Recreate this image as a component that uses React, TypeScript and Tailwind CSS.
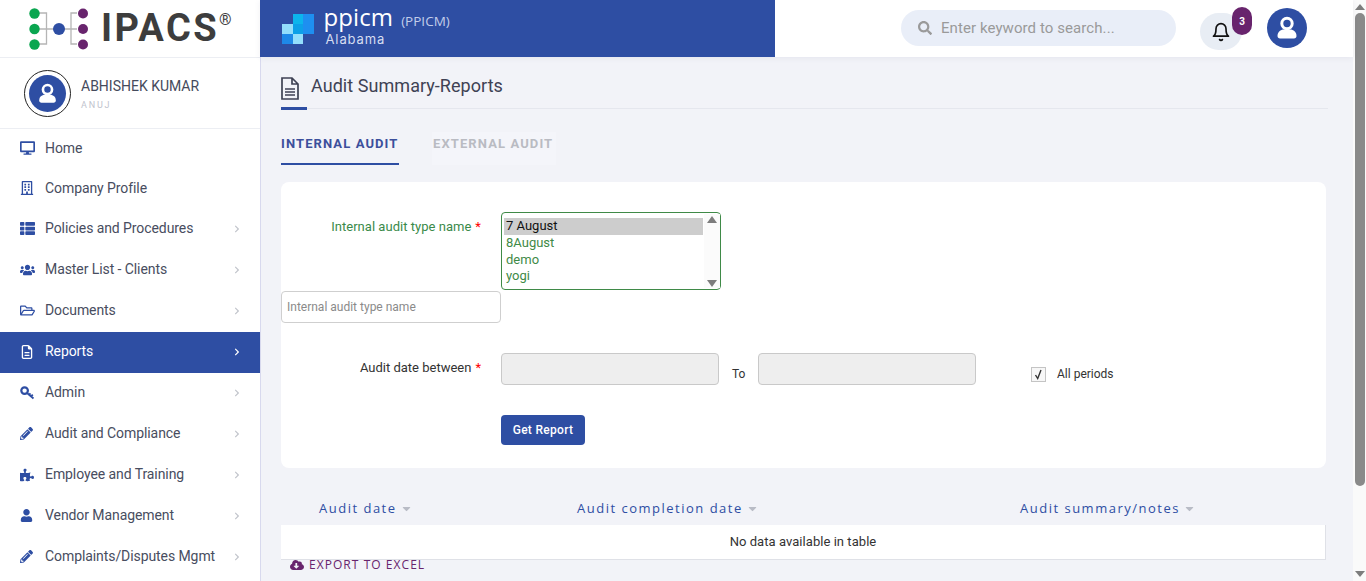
import React from "react";
import { FaDesktop, FaRegBuilding, FaThList, FaUsers, FaRegFolderOpen, FaPencilAlt, FaPuzzlePiece, FaUser, FaSearch, FaChevronRight, FaCloudDownloadAlt, FaCaretDown } from "react-icons/fa";
import { FaRegFileLines } from "react-icons/fa6";
import { LuBell } from "react-icons/lu";

function KeyIcon() {
  return (
    <svg width="15" height="14" viewBox="0 0 15 14" fill="none" stroke="currentColor">
      <circle cx="4.600" cy="4.600" r="3.300" strokeWidth="2.200" />
      <path d="M7 7l6.500 5.500M11 10.500l1.800-1.800M9 8.800l1.500-1.500" strokeWidth="1.800" />
    </svg>
  );
}

const menu = [
  { label: "Home", icon: <FaDesktop size={16} />, h: "h-[40px]" },
  { label: "Company Profile", icon: <FaRegBuilding size={14} />, h: "h-[40px]" },
  { label: "Policies and Procedures", icon: <FaThList size={15} />, arrow: true, h: "h-[41px]" },
  { label: "Master List - Clients", icon: <FaUsers size={16} />, arrow: true, h: "h-[41px]" },
  { label: "Documents", icon: <FaRegFolderOpen size={15} />, arrow: true, h: "h-[41px]" },
  { label: "Reports", icon: <FaRegFileLines size={14} />, arrow: true, active: true, h: "h-[41px]" },
  { label: "Admin", icon: <KeyIcon />, arrow: true, h: "h-[41px]" },
  { label: "Audit and Compliance", icon: <FaPencilAlt size={13} />, arrow: true, h: "h-[41px]" },
  { label: "Employee and Training", icon: <FaPuzzlePiece size={14} />, arrow: true, h: "h-[41px]" },
  { label: "Vendor Management", icon: <FaUser size={13} />, arrow: true, h: "h-[41px]" },
  { label: "Complaints/Disputes Mgmt", icon: <FaPencilAlt size={13} />, arrow: true, h: "h-[41px]" },
];

function LogoMark() {
  return (
    <svg width="60" height="42" viewBox="0 0 60 42" className="shrink-0">
      <g stroke="#b5b5b5" strokeWidth="1.3" fill="none">
        <path d="M6 5H17.500V36H6M6 21H48M48 5H42V36H48" />
      </g>
      <circle cx="5.500" cy="5.500" r="5.200" fill="#0aa650" />
      <circle cx="5.500" cy="21" r="5.200" fill="#0aa650" />
      <circle cx="5.500" cy="36.500" r="5.200" fill="#0aa650" />
      <circle cx="30" cy="21" r="6" fill="#2e4ea3" />
      <circle cx="54" cy="5.500" r="5" fill="#68246d" />
      <circle cx="54" cy="21" r="5" fill="#68246d" />
      <circle cx="54" cy="36.500" r="5" fill="#68246d" />
    </svg>
  );
}

function Squares() {
  const c = ["", "#0cb5ec", "#1e8ff0", "#93defc", "#0ca0e8", "#1e8ff0", "#1e88e8", "#93defc", ""];
  return (
    <div className="grid grid-cols-[repeat(3,10.5px)] grid-rows-[repeat(3,10px)] shrink-0">
      {c.map((v, i) => (
        <div key={i} style={{ background: v || "transparent" }} />
      ))}
    </div>
  );
}

function Avatar({ cls, size }: { cls: string; size: number }) {
  return (
    <div className={`rounded-full bg-[#2e4ea3] flex items-center justify-center ${cls}`}>
      <svg width={size} height={size} viewBox="0 0 24 24" fill="#fff">
        <circle cx="12" cy="7.500" r="5.200" fill="none" stroke="#fff" strokeWidth="3" />
        <path d="M2.500 20c0-4 3-6.500 6.500-6.500h6c3.500 0 6.500 2.500 6.500 6.500 0 1.500-1 2.500-2.500 2.500H5c-1.500 0-2.500-1-2.500-2.500z" />
      </svg>
    </div>
  );
}

function Sidebar() {
  return (
    <aside className="w-[260px] shrink-0 bg-white flex flex-col">
      <div className="h-[58px] border-b border-[#eceef3] flex items-center pl-[29px] gap-[12px]">
        <LogoMark />
        <div className="flex items-start text-[#3d3d3d] font-['Roboto',sans-serif] font-bold text-[38px] tracking-[2.400px] leading-none -mt-[1px]">
          IPACS<span className="text-[16px] font-normal leading-none mt-[3px] tracking-normal">®</span>
        </div>
      </div>
      <div className="h-[71px] border-b border-[#eceef3] flex items-center pl-[24px] gap-[10px]">
        <div className="w-[47px] h-[47px] rounded-full border border-[#222] flex items-center justify-center">
          <Avatar cls="w-[37px] h-[37px]" size={21} />
        </div>
        <div className="flex flex-col gap-[6px] mt-[2px]">
          <div className="text-[14px] leading-[16px] text-[#454a5c]">ABHISHEK KUMAR</div>
          <div className="text-[9px] leading-[11px] tracking-[1.800px] text-[#c0c3cd]">ANUJ</div>
        </div>
      </div>
      {menu.map((m) => (
        <div key={m.label} className={`${m.h} shrink-0 flex items-center pb-[2px] pl-[20px] pr-[19px] ${m.active ? "bg-[#2e4ea3] text-white" : "text-[#484d60]"}`}>
          <span className={`w-[15px] flex justify-start ${m.active ? "text-white" : "text-[#2e4ea3]"}`}>{m.icon}</span>
          <span className="ml-[10px] text-[14px] tracking-[-0.08px] flex-1">{m.label}</span>
          {m.arrow && <FaChevronRight size={8} className={m.active ? "text-white" : "text-[#c2c5cc]"} />}
        </div>
      ))}
    </aside>
  );
}

function Header() {
  return (
    <header className="h-[57px] shrink-0 flex bg-white shadow-[0_1px_6px_rgba(60,70,120,0.08)] relative">
      <div className="w-[515px] bg-[#2e4ea3] flex items-center pl-[22px] gap-[10px] text-white">
        <Squares />
        <div className="flex flex-col -mt-[3px]">
          <div className="flex items-baseline h-[18px] gap-[8px] font-['Open_Sans',sans-serif]">
            <span className="text-[24px] leading-[18px] tracking-[0.1px]">ppicm</span>
            <span className="text-[13.500px] leading-[13px] text-[#c2cdea]">(PPICM)</span>
          </div>
          <div className="mt-[7px] text-[13px] leading-[13px] pl-[2px] tracking-[0.900px] text-[#d6ddf1] font-['Inter',sans-serif]">Alabama</div>
        </div>
      </div>
      <div className="flex-1 flex items-center pl-[126px]">
        <div className="w-[275px] h-[36px] rounded-full bg-[#e9eef8] flex items-center pl-[17px] gap-[9px] -mt-[1px]">
          <FaSearch size={14} className="text-[#9a9a9a]" />
          <span className="text-[15px] tracking-[0.08px] text-[#9a9a9a]">Enter keyword to search...</span>
        </div>
        <div className="relative ml-[24px] w-[42px] h-[37px] rounded-full bg-[#e8edf4] flex items-center justify-center mt-[6px]">
          <LuBell size={20} className="text-[#111]" />
          <span className="absolute left-[32px] -top-[6px] w-[20px] h-[28px] rounded-full bg-[#68246d] text-white text-[10px] font-bold flex items-center justify-center">3</span>
        </div>
        <Avatar cls="w-[40px] h-[40px] ml-[25px] -mt-[1px]" size={24} />
      </div>
    </header>
  );
}

function Req() {
  return <span className="text-[#f00] ml-[4px]">*</span>;
}

function FormCard() {
  return (
    <section className="h-[286px] bg-white rounded-lg mt-[16px] pt-[30px] font-['Roboto',sans-serif]">
      <div className="flex">
        <div className="w-[220px] pr-[20px] pt-[7px] text-right text-[13px] leading-[16px] tracking-[0.03px] text-[#3a8a4a]">
          Internal audit type name<Req />
        </div>
        <div className="w-[220px] h-[78px] border border-[#3f8a47] rounded-[4px] flex pl-[2px] pt-[5px] text-[13px] leading-[16.5px] text-[#3f8a47]">
          <div className="flex-1">
            <div className="bg-[#cdcdcd] text-[#111] pl-[2px] h-[17px]">7 August</div>
            <div className="pl-[2px]">8August</div>
            <div className="pl-[2px]">demo</div>
            <div className="pl-[2px]">yogi</div>
          </div>
          <div className="w-[16px] -mt-[4px] mb-[1px] mr-[0px] ml-[1px] bg-[#fbfbfb] flex flex-col justify-between items-center pt-[2px] pb-[1px]">
            <span className="w-0 h-0 border-x-[5px] border-x-transparent border-b-[7px] border-b-[#7d7d7d]" />
            <span className="w-0 h-0 border-x-[5px] border-x-transparent border-t-[7px] border-t-[#7d7d7d]" />
          </div>
        </div>
      </div>
      <div className="w-[220px] h-[32px] mt-[1px] border border-[#cfcfcf] rounded-[4px] flex items-center pl-[5px] text-[12px] text-[#8a8a8a]">
        Internal audit type name
      </div>
      <div className="flex mt-[30px] items-start">
        <div className="w-[220px] pr-[20px] pt-[7px] text-right text-[13px] leading-[16px] text-[#333]">
          Audit date between<Req />
        </div>
        <div className="w-[218px] h-[32px] bg-[#eeeeee] border border-[#c9c9c9] rounded-[4px]" />
        <div className="w-[39px] pl-[13px] pt-[13px] text-[12px] leading-[16px] text-[#333]">To</div>
        <div className="w-[218px] h-[32px] bg-[#eeeeee] border border-[#c9c9c9] rounded-[4px]" />
        <div className="ml-[55px] mt-[14px] w-[15px] h-[15px] border border-[#c4c4c4] bg-[#f7f7f7] flex items-center justify-center">
          <svg width="11" height="11" viewBox="0 0 11 11" fill="none" stroke="#333" strokeWidth="1.400">
            <path d="M2.500 6l2.200 3.500L8 1" />
          </svg>
        </div>
        <div className="ml-[11px] pt-[13px] text-[12px] leading-[16px] text-[#333]">All periods</div>
      </div>
      <button className="block ml-[220px] mt-[30px] w-[84px] h-[30px] rounded-[4px] bg-[#2e4ea3] text-white text-[12px] tracking-[0.3px] font-medium">
        Get Report
      </button>
    </section>
  );
}

function Th({ label, w, pl }: { label: string; w: string; pl: string }) {
  return (
    <div className={`${w} ${pl} flex items-center gap-[3px] text-[#2e4ea3] text-[13px] tracking-[1.500px] font-['Open_Sans',sans-serif]`}>
      {label}
      <FaCaretDown size={13} className="text-[#b9bcc6]" />
    </div>
  );
}

function Main() {
  return (
    <main className="flex-1 min-h-0 border-l border-[#d8d9ee] pl-[20px] pr-[27px] pt-[20px] font-['Roboto',sans-serif]">
      <div className="h-[32px] -mr-[2px] border-b border-[#e5e7ee] flex items-start relative">
        <svg width="18" height="23" viewBox="0 0 18 23" fill="none" stroke="#3f4254" strokeWidth="1.700" className="shrink-0">
          <path d="M1 1h10l6 6v15H1zM11 1v6h6" />
          <path d="M4 12h10M4 15h10M4 18h10" strokeWidth="1.300" />
        </svg>
        <span className="ml-[12px] -mt-[1px] text-[18px] leading-[20px] tracking-[0.05px] text-[#3f4254]">Audit Summary-Reports</span>
        <span className="absolute left-0 -bottom-[2px] w-[26px] h-[3px] bg-[#2e4ea3]" />
      </div>
      <div className="flex mt-[23px] h-[34px] text-[13px] font-bold tracking-[1.100px] leading-[24px] whitespace-nowrap">
        <div className="w-[118px] h-[33px] border-b-[2px] border-[#2e4ea3] text-[#3c4f9c]">INTERNAL AUDIT</div>
        <div className="ml-[33px] w-[124px] h-[33px] pl-[1px] bg-[#f4f5fa] text-[#b9bbc2]">EXTERNAL AUDIT</div>
      </div>
      <FormCard />
      <div className="flex h-[57px] pt-[31px] items-start">
        <Th label="Audit date" w="w-[296px]" pl="pl-[38px]" />
        <Th label="Audit completion date" w="w-[443px]" pl="" />
        <Th label="Audit summary/notes" w="flex-1" pl="" />
      </div>
      <div className="h-[35px] bg-white border-b border-r border-[#dfe1e7] flex items-center justify-center text-[13px] tracking-[0.05px] text-[#333]">
        No data available in table
      </div>
      <div className="flex items-center gap-[5px] pl-[9px] -mt-[2px] h-[14px] text-[#68246d] text-[12px] tracking-[1.050px] font-['Open_Sans',sans-serif]">
        <FaCloudDownloadAlt size={14} />
        EXPORT TO EXCEL
      </div>
    </main>
  );
}

function Scrollbar() {
  return (
    <div className="w-[13px] shrink-0 bg-[#fafafa] flex flex-col items-center pt-[4px] pb-[4px] justify-between">
      <span className="w-0 h-0 border-x-[5px] border-x-transparent border-b-[6px] border-b-[#7d7d7d]" />
      <div className="w-[10px] h-[473px] rounded-full bg-[#8a8a8a] mt-[3px]" />
      <div className="flex-1" />
      <span className="w-0 h-0 border-x-[5px] border-x-transparent border-t-[6px] border-t-[#7d7d7d]" />
    </div>
  );
}

export default function App() {
  return (
    <div className="w-[1366px] h-[581px] overflow-hidden flex bg-[#f2f3f8] font-['Roboto',sans-serif]">
      <Sidebar />
      <div className="flex-1 min-w-0 flex flex-col">
        <Header />
        <Main />
      </div>
      <Scrollbar />
    </div>
  );
}
